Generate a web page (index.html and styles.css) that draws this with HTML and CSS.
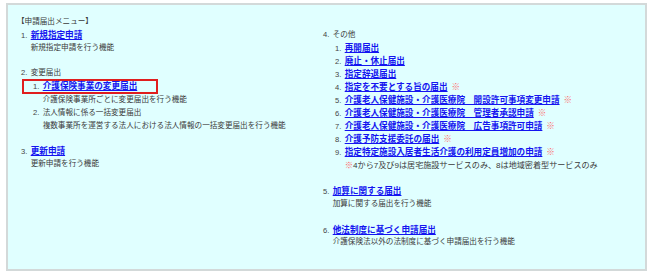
FILE: index.html
```html
<!DOCTYPE html>
<html lang="ja">
<head>
<meta charset="utf-8">
<link rel="stylesheet" href="styles.css">
</head>
<body>
<div class="panel">
  <div class="title">【申請届出メニュー】</div>
  <div class="cols">
    <div class="col">
      <div class="item">
        <div class="row"><span class="num">1.</span><a class="link" href="#">新規指定申請</a></div>
        <div class="desc">新規指定申請を行う機能</div>
      </div>
      <div class="item">
        <div class="row"><span class="num">2.</span><span class="label">変更届出</span></div>
        <div class="sub">
          <div class="row boxed"><span class="num">1.</span><a class="link" href="#">介護保険事業の変更届出</a></div>
          <div class="desc">介護保険事業所ごとに変更届出を行う機能</div>
          <div class="row"><span class="num">2.</span><span class="label">法人情報に係る一括変更届出</span></div>
          <div class="desc">複数事業所を運営する法人における法人情報の一括変更届出を行う機能</div>
        </div>
      </div>
      <div class="item">
        <div class="row"><span class="num">3.</span><a class="link" href="#">更新申請</a></div>
        <div class="desc">更新申請を行う機能</div>
      </div>
    </div>
    <div class="col">
      <div class="item">
        <div class="row head"><span class="num">4.</span><span class="label">その他</span></div>
        <div class="sub tall">
          <div class="row"><span class="num">1.</span><a class="link" href="#">再開届出</a></div>
          <div class="row"><span class="num">2.</span><a class="link" href="#">廃止・休止届出</a></div>
          <div class="row"><span class="num">3.</span><a class="link" href="#">指定辞退届出</a></div>
          <div class="row"><span class="num">4.</span><a class="link" href="#">指定を不要とする旨の届出</a><span class="mark">※</span></div>
          <div class="row"><span class="num">5.</span><a class="link" href="#">介護老人保健施設・介護医療院　開設許可事項変更申請</a><span class="mark">※</span></div>
          <div class="row"><span class="num">6.</span><a class="link" href="#">介護老人保健施設・介護医療院　管理者承認申請</a><span class="mark">※</span></div>
          <div class="row"><span class="num">7.</span><a class="link" href="#">介護老人保健施設・介護医療院　広告事項許可申請</a><span class="mark">※</span></div>
          <div class="row"><span class="num">8.</span><a class="link" href="#">介護予防支援委託の届出</a><span class="mark">※</span></div>
          <div class="row"><span class="num">9.</span><a class="link" href="#">指定特定施設入居者生活介護の利用定員増加の申請</a><span class="mark">※</span></div>
          <div class="desc note"><span class="note-mark">※</span>4から7及び9は居宅施設サービスのみ、8は地域密着型サービスのみ</div>
        </div>
      </div>
      <div class="item">
        <div class="row"><span class="num">5.</span><a class="link" href="#">加算に関する届出</a></div>
        <div class="desc">加算に関する届出を行う機能</div>
      </div>
      <div class="item">
        <div class="row"><span class="num">6.</span><a class="link" href="#">他法制度に基づく申請届出</a></div>
        <div class="desc">介護保険法以外の法制度に基づく申請届出を行う機能</div>
      </div>
    </div>
  </div>
</div>
</body>
</html>
```
FILE: styles.css
```css
html, body {
  margin: 0;
  padding: 0;
  background: #ffffff;
}
body {
  font-family: "Liberation Sans", "Noto Sans CJK JP", sans-serif;
  font-size: 7.6px;
  line-height: 12.8px;
  color: #3a3a3a;
}
.panel {
  margin: 3px 3px 2px 6px;
  height: 268px;
  box-sizing: border-box;
  border: 2px solid #d3d9d9;
  background: #e0ffff;
  padding: 11px 0 0 13px;
}
.title {
  margin-left: -4px;
  white-space: nowrap;
}
.cols {
  display: grid;
  grid-template-columns: 302px 1fr;
}
.item {
  margin-bottom: 12.8px;
}
.row {
  display: flex;
  align-items: baseline;
  white-space: nowrap;
  height: 12.8px;
}
.head {
  height: 13.6px;
}
.tall .row,
.tall .desc {
  height: 13px;
}
.num {
  width: 9.7px;
  flex: none;
  color: #444;
}
.link {
  font-size: 8.6px;
  font-weight: bold;
  color: #1414f0;
  text-decoration: underline;
}
.mark {
  font-size: 8.6px;
  color: #ff6a6a;
  margin-left: 4px;
}
.note {
  font-size: 8.1px;
}
.note-mark {
  font-size: 8.4px;
  color: #ff6a6a;
}
.desc {
  padding-left: 9.7px;
  white-space: nowrap;
  height: 12.8px;
}
.sub {
  padding-left: 12px;
}
.boxed {
  width: 136px;
  height: 15px;
  box-sizing: border-box;
  border: 2px solid #e01e1e;
  margin: -0.5px 0 -0.5px -11px;
  padding-left: 9px;
  line-height: 11px;
}
```
